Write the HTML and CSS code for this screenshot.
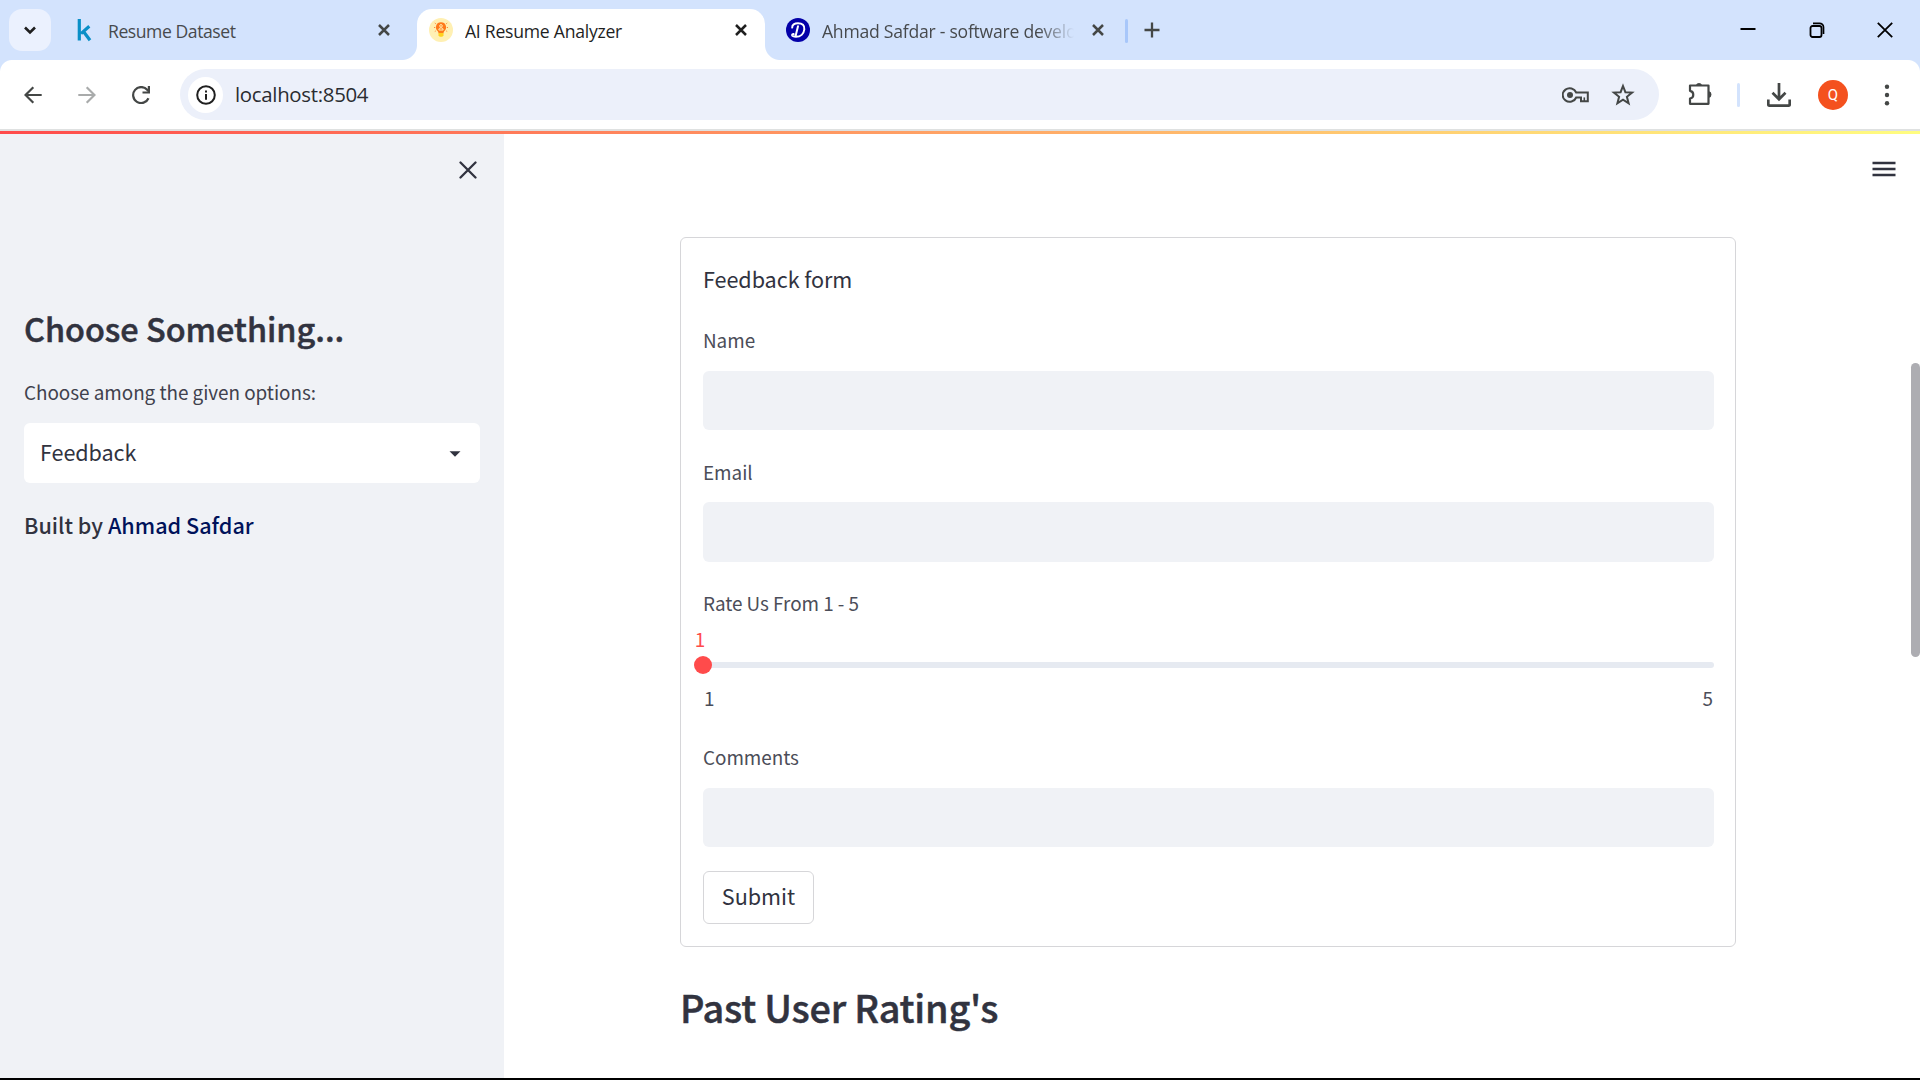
FILE: index.html
```html
<!DOCTYPE html>
<html lang="en">
<head>
<meta charset="utf-8">
<title>AI Resume Analyzer</title>
<link rel="stylesheet" href="styles.css">
</head>
<body>
<div class="browser">
  <header class="tabstrip">
    <div class="tab-search"><svg width="14" height="14" viewBox="0 0 14 14"><path d="M2 4.500l5 5 5-5" fill="none" stroke="#1f1f1f" stroke-width="2.600"/></svg></div>
    <div class="tab tab-first">
      <svg class="fav" width="24" height="24" viewBox="0 0 24 24"><path d="M7.300 1v21.500M17.300 8.200L9 15.600M11.300 13.200l6.700 9" fill="none" stroke="#0a8fc7" stroke-width="3.200"/></svg>
      <span class="tab-title">Resume Dataset</span>
      <svg class="close" width="12" height="12" viewBox="0 0 12 12"><path d="M1 1l10 10M11 1L1 11" stroke="#444746" stroke-width="2.500"/></svg>
    </div>
    <div class="tab tab-active">
      <svg class="fav" width="24" height="24" viewBox="0 0 24 24"><circle cx="12" cy="12" r="12" fill="#fff0b3"/><path d="M12 4.300a5 5 0 0 0-3.200 8.900l1 2.300h4.400l1-2.300A5 5 0 0 0 12 4.300z" fill="#ff7a1a"/><path d="M9.500 15h5v2.500l-1.200 1.300h-2.600l-1.200-1.300z" fill="#ffd21f"/><circle cx="12" cy="7.900" r="1.300" fill="none" stroke="#fff0b3"/><path d="M9.800 12a2.200 2.200 0 0 1 4.400 0z" fill="none" stroke="#fff0b3"/><path d="M5 9.500h1.200M17.800 9.500H19M5.800 5l1 .8M18.200 5l-1 .8M5.800 13.500l1-.6M18.200 13.500l-1-.6" stroke="#ff8a3a"/></svg>
      <span class="tab-title dark">AI Resume Analyzer</span>
      <svg class="close" width="12" height="12" viewBox="0 0 12 12"><path d="M1 1l10 10M11 1L1 11" stroke="#1f1f1f" stroke-width="2.500"/></svg>
    </div>
    <div class="tab tab-third">
      <svg class="fav" width="24" height="24" viewBox="0 0 24 24"><circle cx="12" cy="12" r="12" fill="#0400a8"/><path d="M6.200 9.600C6 6.800 8.500 5.300 12 5.300c4.300 0 6.800 2 6.300 6.200-.5 4.300-3.800 7.200-8.300 7.200-2 0-3.600-.5-3.900-1.400-.2-.8.600-1.300 1.500-1.200M12 8.200l-2.300 9.300" fill="none" stroke="#fff" stroke-width="2" stroke-linecap="round"/></svg>
      <span class="tab-title fade">Ahmad Safdar - software developer</span>
      <svg class="close" width="12" height="12" viewBox="0 0 12 12"><path d="M1 1l10 10M11 1L1 11" stroke="#444746" stroke-width="2.500"/></svg>
    </div>
    <i class="tab-sep"></i>
    <svg class="plus" width="16" height="16" viewBox="0 0 16 16"><path d="M8 .5v15M.5 8h15" stroke="#444746" stroke-width="2.300"/></svg>
    <div class="win">
      <svg width="16" height="16" viewBox="0 0 16 16"><path d="M.5 7h15" stroke="#000" stroke-width="2"/></svg>
      <svg width="16" height="16" viewBox="0 0 16 16"><rect x="1.500" y="4" width="11" height="11" rx="2" fill="none" stroke="#000" stroke-width="1.800"/><path d="M4 1.300h6.500a4 4 0 0 1 4 4V12" fill="none" stroke="#000" stroke-width="1.700"/></svg>
      <svg width="16" height="16" viewBox="0 0 16 16"><path d="M.8.800l14.400 14.400M15.200.800L.8 15.200" stroke="#000" stroke-width="1.800"/></svg>
    </div>
  </header>

  <nav class="toolbar">
    <svg class="nav-ic" width="18" height="18" viewBox="0 0 18 18"><path d="M17.700 9H1.800M9.300 1.200L1.500 9l7.800 7.800" fill="none" stroke="#444746" stroke-width="2.200"/></svg>
    <svg class="nav-ic" width="18" height="18" viewBox="0 0 18 18"><path d="M.3 9h15.900M8.700 1.200L16.500 9l-7.800 7.800" fill="none" stroke="#a9abab" stroke-width="2.200"/></svg>
    <svg class="nav-ic" width="18" height="18" viewBox="0 0 18 18"><path d="M16.500 12.200A8 8 0 1 1 15.200 3.800l1 1.200" fill="none" stroke="#444746" stroke-width="2.200"/><path d="M18 0v7.500h-7.500V5.400h5.300V0z" fill="#444746"/></svg>
    <div class="omnibox">
      <span class="info"><svg width="20" height="20" viewBox="0 0 20 20"><circle cx="10" cy="10" r="8.800" fill="none" stroke="#1f1f1f" stroke-width="2"/><path d="M10 9v5.800M10 5.400v2" stroke="#1f1f1f" stroke-width="2"/></svg></span>
      <span class="url">localhost:8504</span>
      <svg class="key" width="28" height="16" viewBox="0 0 28 16"><path d="M14.200 5.500a7 6.800 0 1 0 0 5h4.800v3.700h6.800V5.500z" fill="none" stroke="#444746" stroke-width="2"/><circle cx="8" cy="8" r="3" fill="#444746"/><path d="M22.300 14v-3.600" stroke="#444746" stroke-width="1.600"/></svg>
      <svg class="star" width="24" height="24" viewBox="0 0 24 24"><path d="M12 3l2.400 6.200 6.700.4-5.200 4.200 1.700 6.500-5.600-3.600-5.600 3.600 1.700-6.500L2.900 9.600l6.700-.4z" fill="none" stroke="#444746" stroke-width="2"/></svg>
    </div>
    <svg class="puzzle" width="25" height="25" viewBox="0 0 25 25"><path d="M2 4.500h18.500v18.300H2v-5.300a3.900 3.900 0 0 0 0-7.700z" fill="none" stroke="#444746" stroke-width="2.200" stroke-linejoin="round"/><path d="M8 4a3.200 3.200 0 0 1 6 0zM21 10.300a3.300 3.300 0 0 1 0 6.400z" fill="#444746"/></svg>
    <i class="tool-sep"></i>
    <svg class="download" width="24" height="24" viewBox="0 0 24 24"><path d="M12 0v16M5.500 9.800l6.500 6.500 6.500-6.500M1.300 16.500v5.200c0 .6.300.9.900.9h19.600c.6 0 .9-.3.900-.9v-5.200" fill="none" stroke="#444746" stroke-width="2.700"/></svg>
    <span class="avatar">Q</span>
    <svg class="dots" width="6" height="22" viewBox="0 0 6 22"><g fill="#444746"><circle cx="3" cy="2.800" r="2.200"/><circle cx="3" cy="11" r="2.200"/><circle cx="3" cy="19.300" r="2.200"/></g></svg>
  </nav>
  <div class="rainbow"></div>

  <div class="app">
    <aside class="sidebar">
      <svg class="side-close" width="18" height="18" viewBox="0 0 18 18"><path d="M1.500 1.500l15 15M16.500 1.500l-15 15" stroke="#31333f" stroke-width="2.300" stroke-linecap="round"/></svg>
      <h2>Choose Something...</h2>
      <div class="label">Choose among the given options:</div>
      <div class="select"><span>Feedback</span><svg width="12" height="6" viewBox="0 0 12 6"><path d="M.5.300h11L6 5.800z" fill="#31333f"/></svg></div>
      <div class="built">Built by <a>Ahmad Safdar</a></div>
    </aside>
    <main class="main">
      <svg class="menu" width="24" height="16" viewBox="0 0 24 16"><path d="M.5 2h23M.5 8h23M.5 14h23" stroke="#31333f" stroke-width="2.300"/></svg>
      <form class="form">
        <div class="form-title">Feedback form</div>
        <div class="field"><div class="label">Name</div><div class="input"></div></div>
        <div class="field"><div class="label">Email</div><div class="input"></div></div>
        <div class="slider">
          <div class="label">Rate Us From 1 - 5</div>
          <div class="value">1</div>
          <div class="track"><i class="thumb"></i></div>
          <div class="ticks"><span>1</span><span>5</span></div>
        </div>
        <div class="field"><div class="label">Comments</div><div class="input"></div></div>
        <div class="submit">Submit</div>
      </form>
      <h1>Past User Rating's</h1>
      <i class="scrollbar"></i>
    </main>
  </div>
</div>
</body>
</html>
```
FILE: styles.css
```css
* { box-sizing: border-box; }
body {
  margin: 0;
  width: 1920px;
  height: 1080px;
  overflow: hidden;
  background: #000;
  color: #31333f;
  font-family: "Noto Sans CJK SC", "Noto Sans", sans-serif;
}
svg { display: block; flex: none; }
i { display: block; flex: none; }
h1, h2 { margin: 0; }
.browser {
  display: flex;
  flex-direction: column;
  height: 1078px;
  background: #fff;
}

/* tab strip */
.tabstrip {
  display: flex;
  align-items: center;
  height: 60px;
  flex: none;
  padding: 0 27px 0 9px;
  background: #d3e3fd;
  font: 17.6px/24px "Open Sans", sans-serif;
}
.tab-search {
  display: grid;
  place-items: center;
  width: 42px;
  height: 42px;
  border-radius: 13px;
  background: #ebf1fe;
}
.tab {
  display: flex;
  align-items: center;
  height: 51px;
  align-self: flex-end;
  padding-bottom: 9px;
}
.tab-title {
  flex: 1;
  margin-left: 12px;
  padding-top: 2px;
  letter-spacing: -0.25px;
  white-space: nowrap;
  overflow: hidden;
  color: #474a4d;
}
.tab-title.dark { color: #1f1f1f; }
.tab-first { width: 366px; padding-left: 21px; padding-right: 27px; }
.tab-first .tab-title { letter-spacing: -0.45px; }
.tab-active {
  position: relative;
  width: 348px;
  padding-left: 12px;
  padding-right: 18px;
  border-radius: 15px 15px 0 0;
  background: #fff;
}
.tab-active::before, .tab-active::after {
  content: "";
  position: absolute;
  bottom: 0;
  width: 15px;
  height: 15px;
}
.tab-active::before { left: -15px; background: radial-gradient(circle at 0 0, transparent 14.5px, #fff 15.5px); }
.tab-active::after { right: -15px; background: radial-gradient(circle at 100% 0, transparent 14.5px, #fff 15.5px); }
.tab-third { width: 339px; padding-left: 21px; }
.tab-third .close { margin-left: 18px; }
.fade {
  -webkit-mask-image: linear-gradient(90deg, #000 calc(100% - 36px), transparent);
  mask-image: linear-gradient(90deg, #000 calc(100% - 36px), transparent);
}
.tab-sep { width: 3px; height: 24px; margin: 2px 16px 0 21px; border-radius: 2px; background: #a8c7fa; }
.win { display: flex; gap: 52.5px; margin-left: auto; }

/* toolbar */
.toolbar {
  display: flex;
  align-items: center;
  height: 71px;
  flex: none;
  padding: 0 29px 0 24px;
  border-bottom: 2px solid #dfe1e1;
  background:
    radial-gradient(circle at 12px 12px, #fff 11.5px, #d3e3fd 12.5px) 0 0 / 12px 12px no-repeat,
    radial-gradient(circle at 0 12px, #fff 11.5px, #d3e3fd 12.5px) 100% 0 / 12px 12px no-repeat,
    #fff;
}
.nav-ic { margin-right: 36px; }
.nav-ic:nth-child(3) { margin-right: 30px; }
.omnibox {
  display: flex;
  align-items: center;
  width: 1479px;
  height: 51px;
  flex: none;
  padding: 0 24px 0 8px;
  border-radius: 26px;
  background: #ecf0fa;
}
.info {
  display: grid;
  place-items: center;
  width: 35px;
  height: 36px;
  border-radius: 50%;
  background: #fff;
}
.url {
  flex: 1;
  margin-left: 12px;
  padding-bottom: 2px;
  font: 20.4px/28px "Open Sans", sans-serif;
  letter-spacing: -0.3px;
  color: #2a2c30;
}
.key { margin-right: 21px; }
.puzzle { margin: 0 24px 3px 29px; }
.tool-sep { width: 3px; height: 24px; border-radius: 2px; background: #d3e3fd; }
.download { margin-left: 27px; }
.avatar {
  flex: none;
  width: 30px;
  height: 30px;
  margin: 0 36px 0 27px;
  border-radius: 50%;
  background: #f4511e;
  color: #fff;
  font: 15px/30px Roboto, sans-serif;
  text-align: center;
}
.rainbow { flex: none; height: 3px; background: linear-gradient(90deg, #ff4b4b, #fffd80); }

/* app */
.app { display: flex; flex: 1; min-height: 0; }
.sidebar { flex: none; width: 504px; padding: 27px 24px 0; background: #f0f2f6; }
.side-close { margin-left: 435px; }
h1, h2 { font-weight: 500; -webkit-text-stroke: 0.5px #31333f; white-space: nowrap; }
h2 { margin-top: 125px; font-size: 32.4px; line-height: 48px; }
.label { font-size: 18.9px; line-height: 30px; letter-spacing: -0.04px; color: #4b4d58; white-space: nowrap; }
.sidebar .label { margin-top: 25px; color: #3f414d; }
.select {
  display: flex;
  align-items: center;
  justify-content: space-between;
  height: 60px;
  margin-top: 16px;
  padding: 0 19px 3px 16px;
  border-radius: 6px;
  background: #fff;
  font-size: 21.6px;
  line-height: 36px;
  letter-spacing: -0.08px;
}
.select svg { margin-top: 4px; }
.built { margin-top: 24px; font-size: 21.6px; line-height: 36px; font-weight: 500; }
.built a { color: #00125a; }

.main { position: relative; flex: 1; min-width: 0; padding: 27px 0 0 176px; }
.menu { margin-left: 1192px; }
.form {
  width: 1056px;
  height: 710px;
  margin-top: 60px;
  padding: 23px 21px 0 22px;
  border: 1px solid #d6d6d9;
  border-radius: 6px;
}
.form-title { font-size: 21.6px; line-height: 36px; letter-spacing: -0.06px; }
.field { margin-top: 26.4px; }
.form-title + .field { margin-top: 28.3px; }
.input { height: 59.5px; margin-top: 15.6px; border-radius: 6px; background: #f0f2f6; }
.slider { margin-top: 26.4px; }
.value { width: 30px; margin: 6px 0 0 -18px; font-size: 18.9px; line-height: 30px; color: #ff4b4b; text-align: center; }
.track { position: relative; height: 6px; margin-top: 8px; border-radius: 3px; background: #e6eaf1; }
.thumb { position: absolute; left: -9px; top: -6px; width: 18px; height: 18px; border-radius: 50%; background: #ff4b4b; }
.ticks { display: flex; justify-content: space-between; margin-top: 15px; padding: 0 1px; font-size: 18.9px; line-height: 30px; color: #4b4d58; }
.slider + .field { margin-top: 29px; }
.submit {
  width: 111px;
  height: 53px;
  margin-top: 24px;
  padding-top: 6px;
  border: 1px solid #d6d6d9;
  border-radius: 6px;
  font-size: 21.6px;
  line-height: 36px;
  text-align: center;
}
h1 { margin-top: 35px; font-size: 37.8px; line-height: 50px; letter-spacing: -0.2px; }
.scrollbar { position: absolute; right: 0; top: 229px; width: 9px; height: 294px; border-radius: 5px; background: #adadb2; }
```
